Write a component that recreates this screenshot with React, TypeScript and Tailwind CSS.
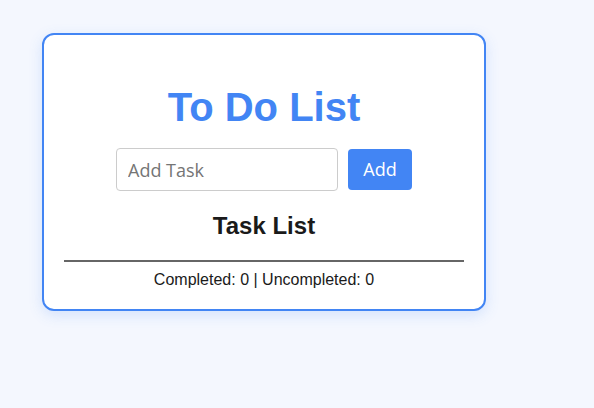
export default function App() {
  return (
    <div className="min-h-[408px] w-full bg-[#f4f7fe] pl-[42px] pt-[33px]" style={{ fontFamily: '"Liberation Sans", Arial, sans-serif' }}>
      <div className="flex h-[278px] w-[444px] flex-col items-center rounded-[12px] border-2 border-[#4285f4] bg-white px-[20px] shadow-[0_4px_14px_rgba(66,133,244,0.18)]">
        <h1 className="mt-[49px] text-[40px] font-bold leading-[46px] text-[#4285f4]">To Do List</h1>
        <div className="mt-[18px] flex items-center gap-[10px]" style={{ fontFamily: '"Open Sans", "Noto Sans", sans-serif' }}>
          <input
            type="text"
            placeholder="Add Task"
            className="h-[43px] w-[222px] rounded-[4px] border border-[#cccccc] px-[11px] text-[18px] text-[#333] outline-none placeholder:text-[#757575]"
          />
          <button className="h-[41px] w-[64px] rounded-[4px] bg-[#4285f4] text-[18px] text-white">Add</button>
        </div>
        <h2 className="mt-[21px] text-[24px] font-bold leading-[28px] text-[#1a1a1a]">Task List</h2>
        <div className="mt-[20px] h-[2px] w-full bg-[#666666]" />
        <p className="mt-[6px] text-[16px] leading-6 text-[#1a1a1a]">Completed: 0 | Uncompleted: 0</p>
      </div>
    </div>
  );
}
